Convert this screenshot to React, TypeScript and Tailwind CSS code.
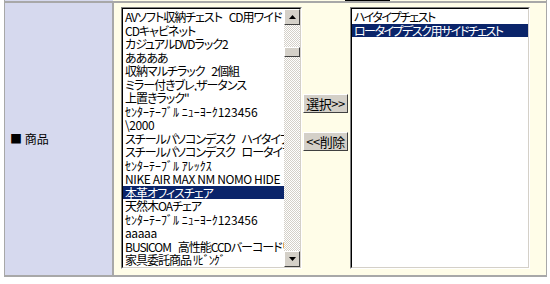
import React from 'react';

// w: 'h' = half-width kana row (no tightening), 'l' = latin row, 'k' = katakana-heavy row
type W = 'h' | 'l' | 'k';

const items: { t: string; w?: W }[] = [
  { t: 'AVソフト収納チェスト\u2002 CD用ワイド' },
  { t: 'CDキャビネット' },
  { t: 'カジュアルDVDラック2' },
  { t: 'ああああ' },
  { t: '収納マルチラック\u2002 2個組' },
  { t: 'ミラー付きブレ,ザータンス' },
  { t: '上置きラック"' },
  { t: 'ｾﾝﾀｰﾃｰﾌﾞﾙ ﾆｭｰﾖｰｸ123456', w: 'h' },
  { t: '\\2000', w: 'l' },
  { t: 'スチールパソコンデスク\u2002 ハイタイプ' },
  { t: 'スチールパソコンデスク\u2002 ロータイプ' },
  { t: 'ｾﾝﾀｰﾃｰﾌﾞﾙ ｱﾚｯｸｽ', w: 'h' },
  { t: 'NIKE AIR MAX NM NOMO HIDE', w: 'l' },
  { t: '本革オフィスチェア' },
  { t: '天然木OAチェア' },
  { t: 'ｾﾝﾀｰﾃｰﾌﾞﾙ ﾆｭｰﾖｰｸ123456', w: 'h' },
  { t: 'aaaaa', w: 'l' },
  { t: 'BUSICOM\u2002 高性能CCDバーコードリーダー' },
  { t: '家具委託商品 ﾘﾋﾞﾝｸﾞ' },
];

const picked = ['ハイタイプチェスト', 'ロータイプデスク用サイドチェスト'];

const font = "font-['MS_PGothic','Noto_Sans_CJK_JP',sans-serif] [font-feature-settings:'palt']";

function Row({ text, w, selected }: { text: string; w?: W; selected?: boolean }) {
  const track =
    w === 'h'
      ? 'tracking-normal'
      : w === 'l'
        ? 'tracking-[-0.4px]'
        : w === 'k'
          ? 'tracking-[-1.5px]'
          : 'tracking-[-1px]';
  return (
    <div
      className={`h-[13.5px] leading-[13.5px] pl-[2px] whitespace-pre overflow-hidden ${track} ${
        selected ? 'bg-[#0a246a] text-white' : 'text-black'
      }`}
    >
      {text}
    </div>
  );
}

function Arrow({ up }: { up?: boolean }) {
  return (
    <div className="w-[16px] h-[16px] bg-[#d4d0c8] border border-t-white border-l-white border-r-[#404040] border-b-[#404040] flex items-center justify-center">
      <svg width="7" height="4" viewBox="0 0 7 4">
        <path d={up ? 'M3.5 0 L7 4 L0 4 Z' : 'M0 0 L7 0 L3.5 4 Z'} fill="#000" />
      </svg>
    </div>
  );
}

function Button({ children }: { children: React.ReactNode }) {
  return (
    <button className="w-[45px] h-[19px] bg-[#d4d0c8] border border-t-white border-l-white border-r-[#404040] border-b-[#404040] text-[13px] leading-none tracking-[-0.5px] text-black flex items-center justify-center">
      {children}
    </button>
  );
}

export default function App() {
  return (
    <div className={`w-[550px] h-[284px] bg-white pl-[4px] pr-[3px] pb-[7px] ${font} text-[12px]`}>
      <div className="h-full bg-[#a8a8a8] flex flex-col pl-px pr-px pb-[2px]">
        <div className="flex h-px">
          <div className="w-[108px] bg-[#d6d9ee]" />
          <div className="flex-1 bg-[#fffde8]">
            <div className="ml-[232px] w-[45px] h-full bg-black" />
          </div>
        </div>
        <div className="flex flex-1 gap-[2px] pt-[2px]">
          <div className="w-[107px] bg-[#d6d9ee] flex items-center pl-[5px] text-black">
            ■ 商品
          </div>
          <div className="flex-1 bg-[#fffde8] flex items-start pl-[7px] pt-[4px]">
            <div className="w-[181px] h-[262px] border border-t-[#808080] border-l-[#808080] border-r-white border-b-white">
              <div className="h-full border border-t-black border-l-black border-r-[#d4d0c8] border-b-[#d4d0c8] bg-white flex">
                <div className="flex-1 min-w-0 pt-[1px]">
                  {items.map((it, i) => (
                    <Row key={i} text={it.t} w={it.w} selected={i === 13} />
                  ))}
                </div>
                <div className="w-[16px] flex flex-col bg-[repeating-conic-gradient(#d4d0c8_0_25%,#ffffff_0_50%)] bg-[length:2px_2px]">
                  <Arrow up />
                  <div className="h-[22px]" />
                  <div className="h-[10px] bg-[#d4d0c8] border border-t-white border-l-white border-r-[#404040] border-b-[#404040]" />
                  <div className="flex-1" />
                  <Arrow />
                </div>
              </div>
            </div>
            <div className="flex flex-col gap-[19px] pt-[87px] w-[48px] items-start pl-px">
              <Button>選択&gt;&gt;</Button>
              <Button>&lt;&lt;削除</Button>
            </div>
            <div className="w-[180px] h-[262px] border border-t-[#808080] border-l-[#808080] border-r-white border-b-white">
              <div className="h-full border border-t-black border-l-black border-r-[#d4d0c8] border-b-[#d4d0c8] bg-white pt-[1px]">
                {picked.map((t, i) => (
                  <Row key={i} text={t} w="k" selected={i === 1} />
                ))}
              </div>
            </div>
          </div>
        </div>
      </div>
    </div>
  );
}
